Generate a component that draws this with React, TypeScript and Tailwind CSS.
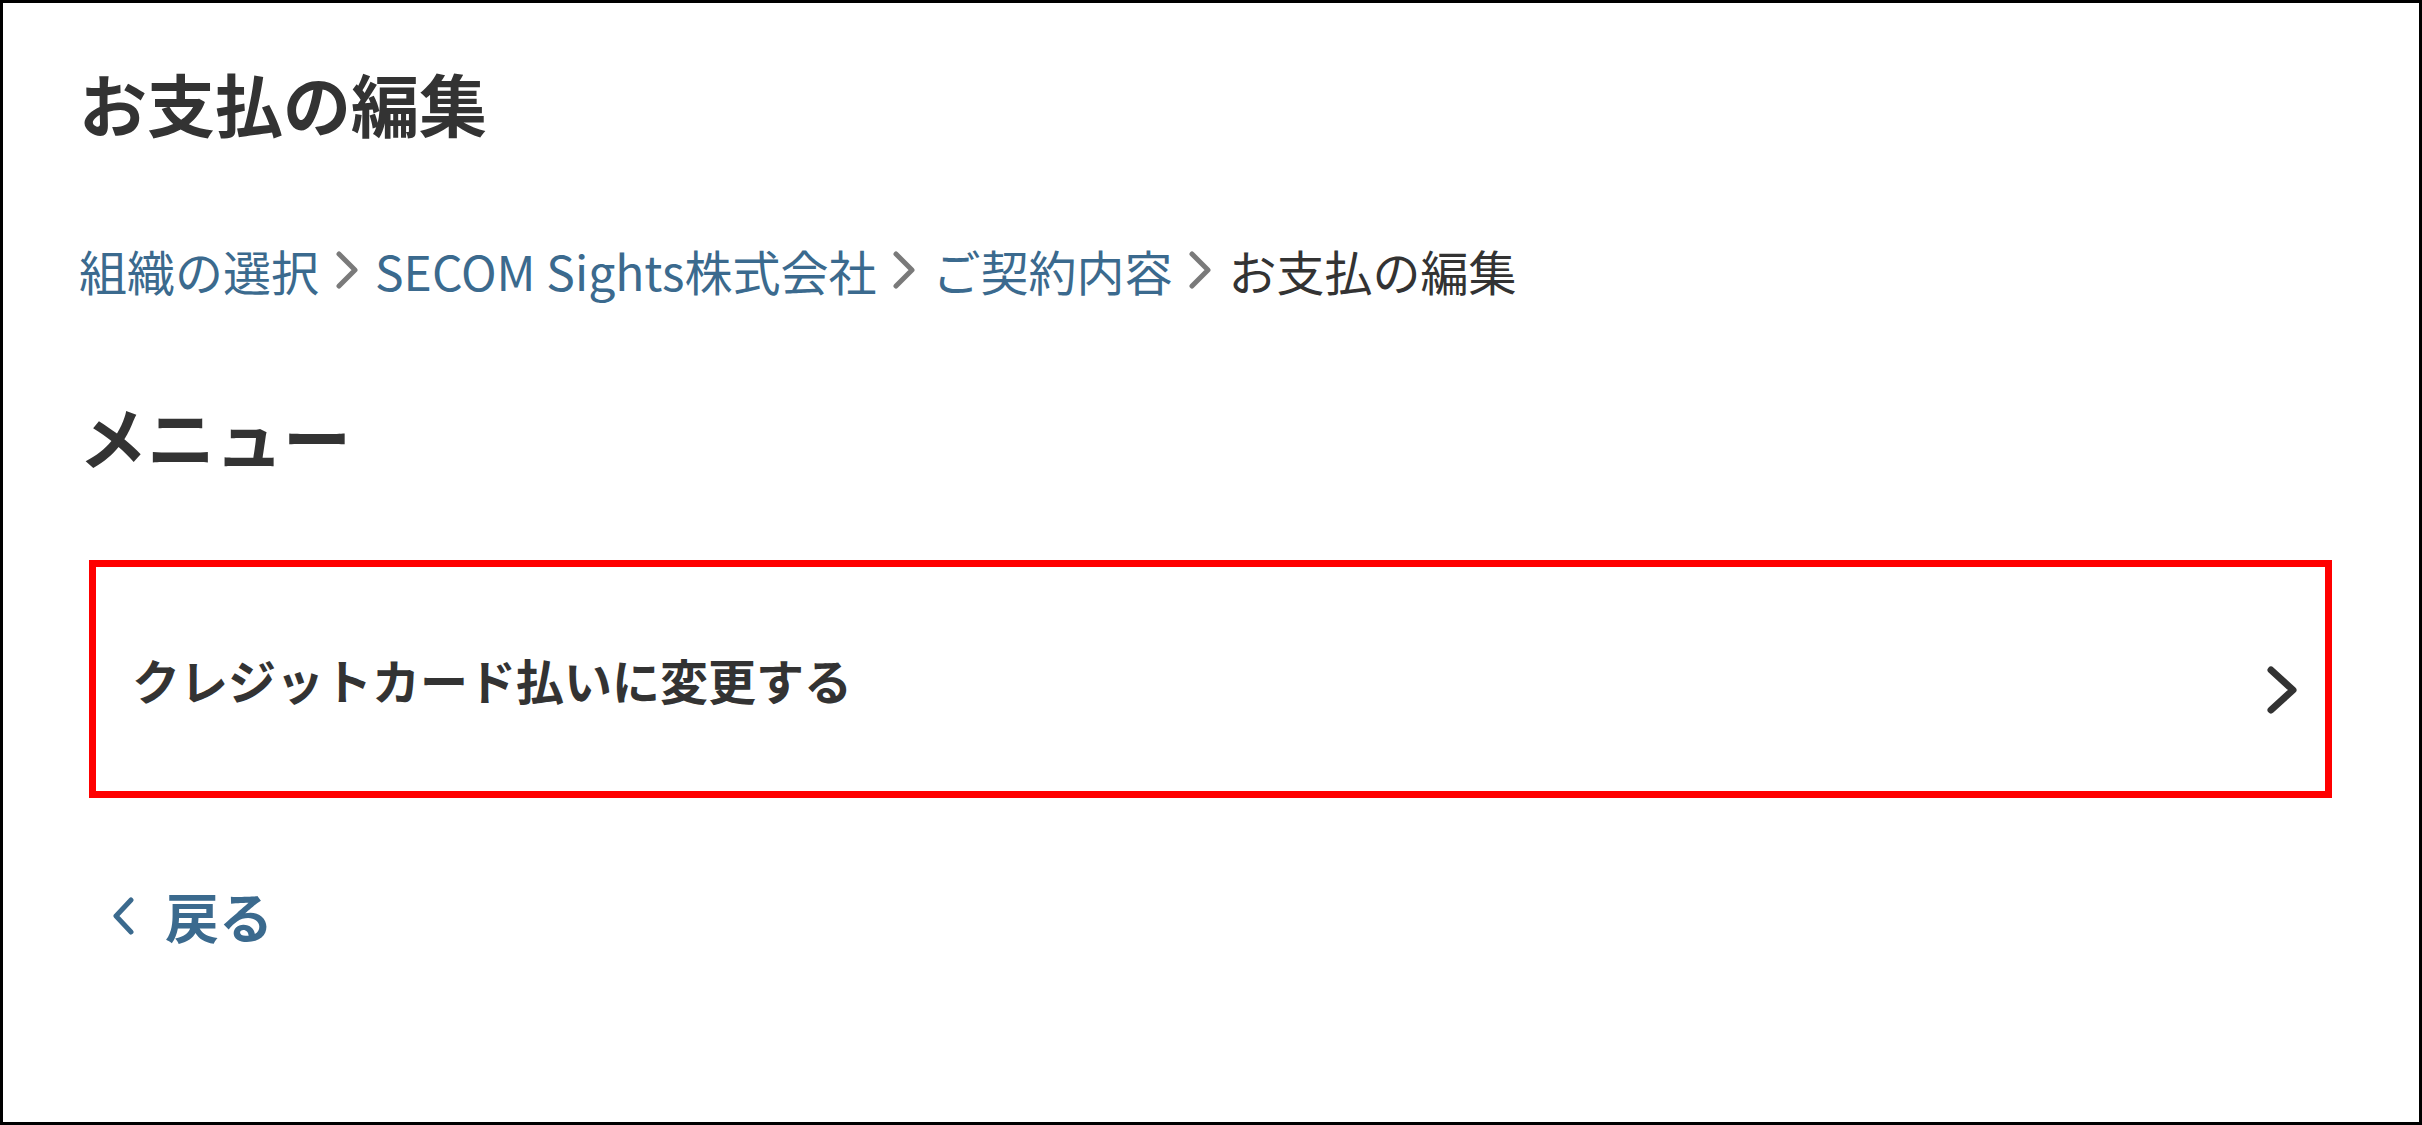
export default function App() {
  const crumbs = ["組織の選択", "SECOM Sights株式会社", "ご契約内容"];

  return (
    <div className="h-[1125px] w-full border-[3px] border-black bg-white pl-[76px] pr-[87px] pt-[66px] font-['Noto_Sans_CJK_JP','Noto_Sans',sans-serif] text-[#333]">
      {/* ── Page title ── */}
      <h1 className="text-[68px] font-bold leading-none">お支払の編集</h1>

      {/* ── Breadcrumb ── */}
      <nav className="mt-[109px] flex items-center text-[48px] leading-none">
        {crumbs.map((c) => (
          <div key={c} className="flex items-center">
            <a className="text-[#3b6a8e]">{c}</a>
            <svg width="24" height="38" viewBox="0 0 24 38" className="mx-[16px]">
              <polyline
                points="4,3 20,19 4,35"
                fill="none"
                stroke="#7a7a7a"
                strokeWidth="5"
                strokeLinecap="round"
                strokeLinejoin="round"
              />
            </svg>
          </div>
        ))}
        <span>お支払の編集</span>
      </nav>

      {/* ── Menu ── */}
      <h2 className="mt-[108px] text-[68px] font-bold leading-none">メニュー</h2>

      <a className="ml-[10px] mt-[90px] flex h-[238px] items-center justify-between border-[7px] border-[#ff0000] pl-[36px] pr-[28px]">
        <span className="text-[48px] font-bold leading-none">クレジットカード払いに変更する</span>
        <svg width="30" height="48" viewBox="0 0 30 48" className="mt-[22px]">
          <polyline
            points="4,4 26,24 4,44"
            fill="none"
            stroke="#333"
            strokeWidth="7"
            strokeLinecap="round"
            strokeLinejoin="round"
          />
        </svg>
      </a>

      {/* ── Back link ── */}
      <a className="mt-[91px] flex items-center gap-[28px] pl-[32px] text-[54px] font-bold leading-none text-[#3b6a8e]">
        <svg width="26" height="38" viewBox="0 0 26 38">
          <polyline
            points="20,3 5,19 20,35"
            fill="none"
            stroke="#3b6a8e"
            strokeWidth="5"
            strokeLinecap="round"
            strokeLinejoin="round"
          />
        </svg>
        <span>戻る</span>
      </a>
    </div>
  );
}
